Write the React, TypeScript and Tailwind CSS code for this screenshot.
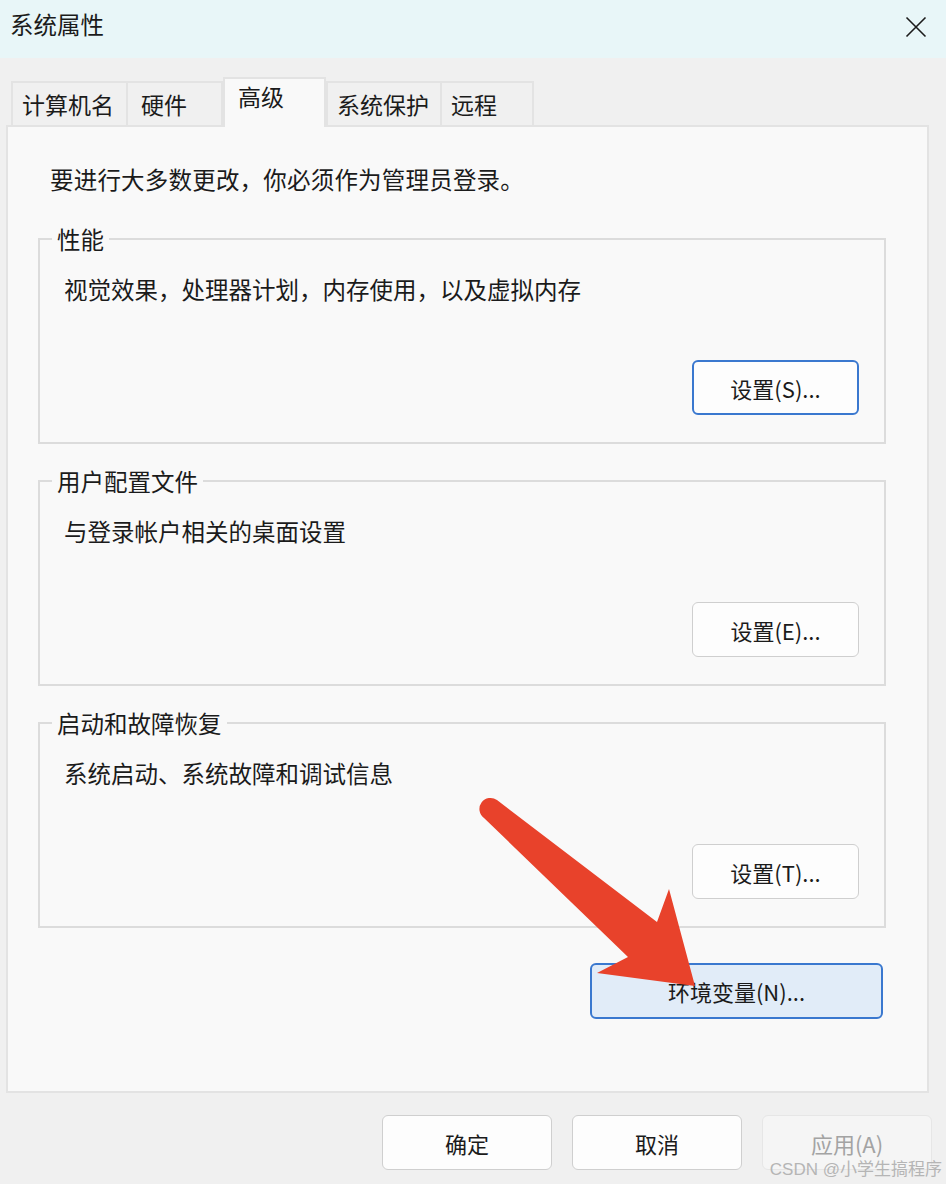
import React from 'react';

const tabs = ['计算机名', '硬件', '高级', '系统保护', '远程'];
const tabWidths = ['w-[117px]', 'w-[95px]', 'w-[103px]', 'w-[116px]', 'w-[92px]'];

function DlgButton({
    label,
    variant = 'normal',
    className = '',
}: {
    label: string;
    variant?: 'normal' | 'focus' | 'accent' | 'disabled';
    className?: string;
}) {
    const styles = {
        normal: 'bg-[#fdfdfd] border border-[#cfcfcf] text-[#1b1b1b]',
        focus: 'bg-[#fdfdfd] border-2 border-[#3a78cf] text-[#1b1b1b]',
        accent: 'bg-[#e1ecf8] border-2 border-[#3a78cf] text-[#1b1b1b]',
        disabled: 'bg-[#f5f5f5] border border-[#e6e6e6] text-[#a3a3a3]',
    }[variant];
    return (
        <button className={`flex items-center justify-center rounded-[6px] text-[22px] leading-none ${styles} ${className}`}>
            {label}
        </button>
    );
}

function Group({ title, desc, btn, focus }: { title: string; desc: string; btn: string; focus?: boolean }) {
    return (
        <div className="relative ml-[30px] w-[848px] h-[206px] border-2 border-[#dcdcdc] flex flex-col pl-[24px] pr-[25px] pt-[33px] pb-[27px]">
            <span className="absolute -top-[17px] left-[12px] bg-[#f9f9f9] px-[5px] text-[23.5px] leading-[32px]">
                {title}
            </span>
            <p className="text-[23.5px] leading-[32px]">{desc}</p>
            <DlgButton label={btn} variant={focus ? 'focus' : 'normal'} className="mt-auto self-end w-[167px] h-[55px]" />
        </div>
    );
}

export default function App() {
    return (
        <div className="relative w-[946px] h-[1184px] overflow-hidden bg-[#f0f0f0] text-[#1b1b1b] font-['Microsoft_YaHei','Noto_Sans_CJK_SC',sans-serif]">
            {/* title bar */}
            <div className="h-[58px] bg-[#e8f6f8] flex items-center justify-between pl-[10px] pr-[19px] pb-[8px]">
                <span className="text-[23.5px]">系统属性</span>
                <svg width="22" height="22" viewBox="0 0 22 22" className="mt-[4px]">
                    <path d="M1.5 1.5 L20.5 20.5 M20.5 1.5 L1.5 20.5" stroke="#1b1b1b" strokeWidth="1.6" />
                </svg>
            </div>

            {/* tabs */}
            <div className="flex items-end pl-[11px] pt-[19px]">
                {tabs.map((t, i) =>
                    t === '高级' ? (
                        <div
                            key={t}
                            className={`${tabWidths[i]} h-[50px] -mb-[2px] relative z-10 bg-[#f9f9f9] border-2 border-b-0 border-[#e3e3e3] flex pl-[13px] pt-[1px] text-[23px] leading-[32px]`}
                        >
                            {t}
                        </div>
                    ) : (
                        <div
                            key={t}
                            className={`${tabWidths[i]} h-[44px] bg-[#f0f0f0] border-2 border-b-0 ${i === 0 || i === 3 ? '' : 'border-l-0'} border-[#e3e3e3] flex items-center ${i === 1 ? 'pl-[13px]' : 'pl-[9px]'} text-[23px] leading-[32px]`}
                        >
                            {t}
                        </div>
                    )
                )}
            </div>

            {/* panel */}
            <div className="ml-[6px] w-[923px] h-[968px] border-2 border-[#e3e3e3] bg-[#f9f9f9] flex flex-col">
                <p className="pl-[42px] pt-[36px] text-[23.5px] leading-[32px] tracking-[0.2px]">要进行大多数更改，你必须作为管理员登录。</p>
                <div className="mt-[43px] flex flex-col gap-[36px]">
                    <Group title="性能" desc="视觉效果，处理器计划，内存使用，以及虚拟内存" btn="设置(S)..." focus />
                    <Group title="用户配置文件" desc="与登录帐户相关的桌面设置" btn="设置(E)..." />
                    <Group title="启动和故障恢复" desc="系统启动、系统故障和调试信息" btn="设置(T)..." />
                </div>
                <DlgButton label="环境变量(N)..." variant="accent" className="mt-[35px] ml-[582px] w-[293px] h-[56px]" />
            </div>

            {/* bottom buttons */}
            <div className="flex justify-end gap-[20px] pr-[14px] pt-[22px]">
                <DlgButton label="确定" className="w-[170px] h-[55px]" />
                <DlgButton label="取消" className="w-[170px] h-[55px]" />
                <DlgButton label="应用(A)" variant="disabled" className="w-[170px] h-[55px]" />
            </div>

            {/* annotation arrow */}
            <svg className="absolute inset-0 pointer-events-none" width="946" height="1184" viewBox="0 0 946 1184">
                <path
                    d="M484 818 A11 11 0 0 1 497 800 L657 922 L669 889 L695 986 L597 973 L628 957 Z"
                    fill="#e8422b"
                />
            </svg>

            <span className="absolute right-[4px] bottom-[6px] text-[17px] leading-none text-[#b5b5b5] font-['Liberation_Sans','Noto_Sans_CJK_SC',sans-serif]">
                CSDN @小学生搞程序
            </span>
        </div>
    );
}
